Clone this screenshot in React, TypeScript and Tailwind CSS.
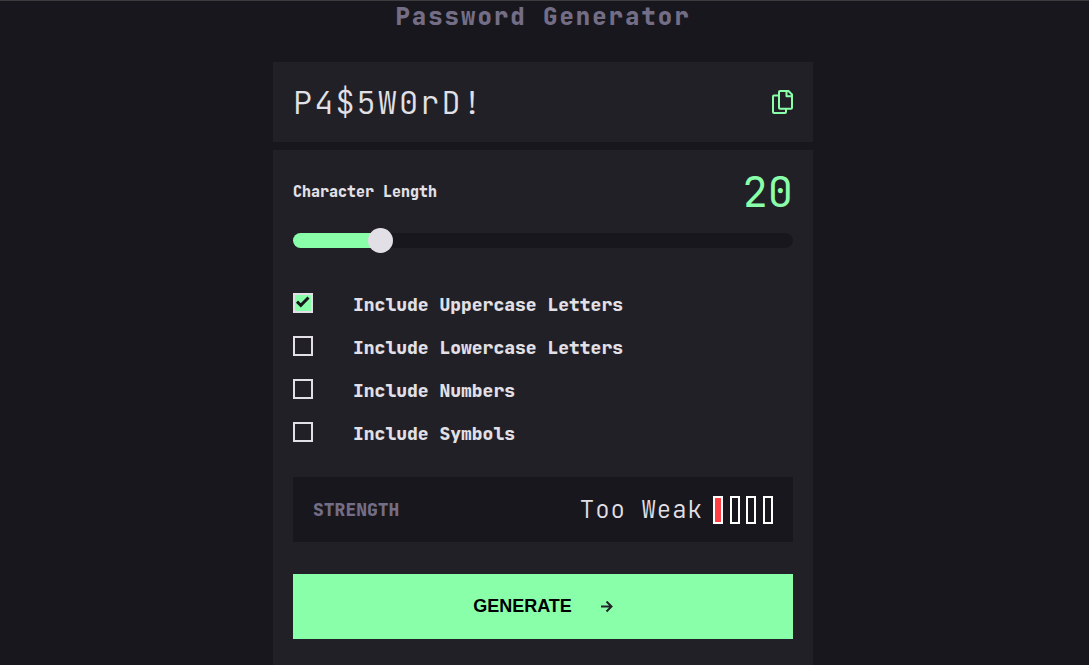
import { useState } from "react";

const OPTIONS = [
  "Include Uppercase Letters",
  "Include Lowercase Letters",
  "Include Numbers",
  "Include Symbols",
];

const MIN = 5;
const MAX = 100;

function CopyIcon() {
  return (
    <svg width="22" height="24" viewBox="0 0 22 24" fill="none" stroke="#8affaa" strokeWidth="2" strokeLinejoin="round" strokeLinecap="round">
      <path d="M8 5.500H3Q2 5.500 2 6.500V22Q2 23 3 23H14Q15 23 15 22V19" />
      <path d="M9 1H17.500L21 4.500V17.700Q21 18.700 20 18.700H9Q8 18.700 8 17.700V2Q8 1 9 1Z" />
      <path d="M15.500 1.500V6.300H20.500" />
    </svg>
  );
}

export default function App() {
  const [length, setLength] = useState(20);
  const [checked, setChecked] = useState([true, false, false, false]);
  const ratio = (length - MIN) / (MAX - MIN);
  const fill = `calc(${ratio} * (100% - 25px) + 12px)`;

  return (
    <div className="flex min-h-screen flex-col items-center border-t border-[#3c3c3e] bg-[#18171d] pr-[3px] font-['JetBrains_Mono','DejaVu_Sans_Mono',monospace] text-[#e2e0e6]">
      <h1 className="text-[24px] leading-[32px] font-extrabold tracking-[2px] text-[#736d86]">Password Generator</h1>

      <main className="mt-[29px] flex w-full max-w-[540px] flex-1 flex-col gap-2">
        <section className="flex h-20 items-center justify-between bg-[#212026] px-5">
          <output className="pt-px text-[32px] leading-[42px] font-light tracking-[2px]">P4$5W0rD!</output>
          <button type="button" aria-label="Copy password">
            <CopyIcon />
          </button>
        </section>

        <section className="flex-1 bg-[#212026] px-5 pt-[13px] pb-[26px]">
          <div className="flex h-[58px] items-center justify-between">
            <label htmlFor="length" className="text-[15px] font-extrabold">
              Character Length
            </label>
            <span className="text-[42px] leading-[58px] text-[#8affaa]">{length}</span>
          </div>
          <input
            id="length"
            type="range"
            min={MIN}
            max={MAX}
            value={length}
            onChange={(e) => setLength(Number(e.target.value))}
            style={{ background: `linear-gradient(to right, #8affaa ${fill}, #18171d ${fill})` }}
            className="mt-3 block h-[15px] w-full cursor-pointer appearance-none rounded-full [&::-webkit-slider-thumb]:size-[25px] [&::-webkit-slider-thumb]:appearance-none [&::-webkit-slider-thumb]:rounded-full [&::-webkit-slider-thumb]:bg-[#e2e0e6]"
          />

          <ul className="mt-[45px] flex flex-col gap-[19px]">
            {OPTIONS.map((label, i) => (
              <li key={label}>
                <label className="flex items-start gap-10">
                  <span className="grid size-5 shrink-0">
                    <input
                      type="checkbox"
                      checked={checked[i]}
                      onChange={() => setChecked(checked.map((c, j) => (j === i ? !c : c)))}
                      className="col-start-1 row-start-1 size-5 appearance-none border-2 border-[#e2e0e6] checked:bg-[#8affaa]"
                    />
                    {checked[i] && (
                      <svg viewBox="0 0 20 20" className="pointer-events-none col-start-1 row-start-1 size-5" fill="none" stroke="#18171d" strokeWidth="3">
                        <path d="M4 8.700L7.800 12.300L15.500 4.500" />
                      </svg>
                    )}
                  </span>
                  <span className="text-[18px] leading-6 font-extrabold">{label}</span>
                </label>
              </li>
            ))}
          </ul>

          <div className="mt-[31px] flex h-[65px] items-center justify-between bg-[#18171d] px-5">
            <span className="text-[18px] font-extrabold text-[#736d86]">STRENGTH</span>
            <div className="flex items-center gap-2.5">
              <span className="text-[24px] font-light tracking-[1px]">Too Weak</span>
              <div className="flex w-[60px] justify-between">
                {[0, 1, 2, 3].map((n) => (
                  <span key={n} className={n === 0 ? "h-7 w-2.5 border-2 border-white bg-[#ff3f43]" : "h-7 w-2.5 border-2 border-white"} />
                ))}
              </div>
            </div>
          </div>

          <button type="button" className="mt-8 flex h-[65px] w-full items-center justify-center gap-[29px] bg-[#8affaa] font-['Liberation_Sans',Arial,sans-serif] text-[18px] font-bold text-black">
            GENERATE
            <svg width="12" height="12" viewBox="0 0 12 12" fill="none" stroke="#24232c" strokeWidth="2">
              <path d="M0 5.500H10.500M5.500 0.500L10.500 5.500L5.500 10.500" />
            </svg>
          </button>
        </section>
      </main>
    </div>
  );
}
